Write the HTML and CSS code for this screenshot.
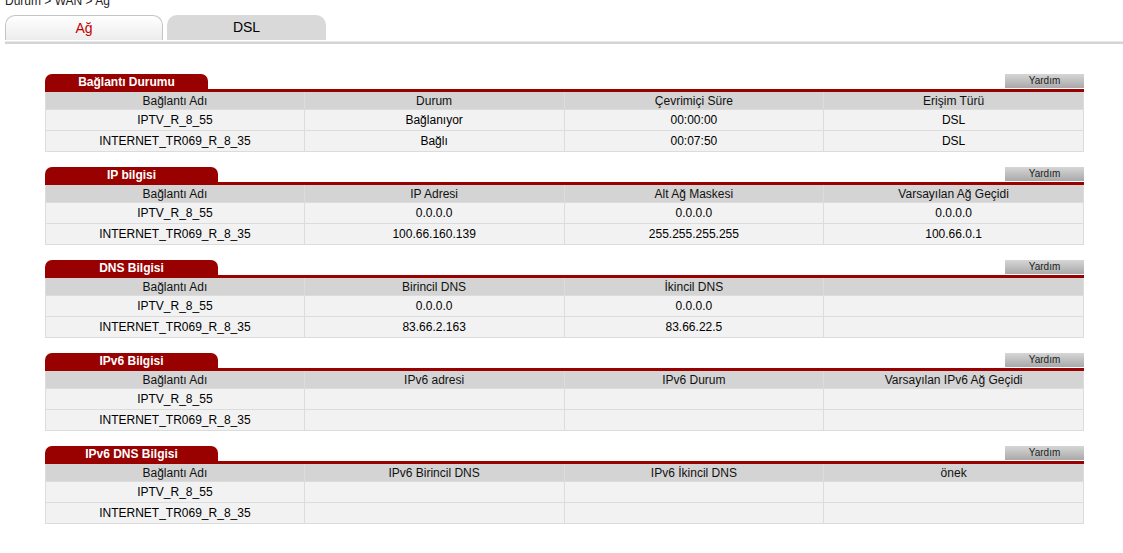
FILE: index.html
```html
<!DOCTYPE html>
<html lang="tr">
<head>
<meta charset="utf-8">
<title>WAN</title>
<link rel="stylesheet" href="styles.css">
</head>
<body>
<div class="crumb">Durum &gt; WAN &gt; Ağ</div>
<div class="tabs">
  <div class="tab active">Ağ</div>
  <div class="tab">DSL</div>
</div>
<div class="tabline"></div>

<div class="content">
  <section class="box">
    <div class="box-head">
      <div class="title w163">Bağlantı Durumu</div>
      <div class="help">Yardım</div>
    </div>
    <table>
      <tr><th>Bağlantı Adı</th><th>Durum</th><th>Çevrimiçi Süre</th><th>Erişim Türü</th></tr>
      <tr><td>IPTV_R_8_55</td><td>Bağlanıyor</td><td>00:00:00</td><td>DSL</td></tr>
      <tr><td>INTERNET_TR069_R_8_35</td><td>Bağlı</td><td>00:07:50</td><td>DSL</td></tr>
    </table>
  </section>

  <section class="box">
    <div class="box-head">
      <div class="title">IP bilgisi</div>
      <div class="help">Yardım</div>
    </div>
    <table>
      <tr><th>Bağlantı Adı</th><th>IP Adresi</th><th>Alt Ağ Maskesi</th><th>Varsayılan Ağ Geçidi</th></tr>
      <tr><td>IPTV_R_8_55</td><td>0.0.0.0</td><td>0.0.0.0</td><td>0.0.0.0</td></tr>
      <tr><td>INTERNET_TR069_R_8_35</td><td>100.66.160.139</td><td>255.255.255.255</td><td>100.66.0.1</td></tr>
    </table>
  </section>

  <section class="box">
    <div class="box-head">
      <div class="title">DNS Bilgisi</div>
      <div class="help">Yardım</div>
    </div>
    <table>
      <tr><th>Bağlantı Adı</th><th>Birincil DNS</th><th>İkincil DNS</th><th></th></tr>
      <tr><td>IPTV_R_8_55</td><td>0.0.0.0</td><td>0.0.0.0</td><td></td></tr>
      <tr><td>INTERNET_TR069_R_8_35</td><td>83.66.2.163</td><td>83.66.22.5</td><td></td></tr>
    </table>
  </section>

  <section class="box">
    <div class="box-head">
      <div class="title">IPv6 Bilgisi</div>
      <div class="help">Yardım</div>
    </div>
    <table>
      <tr><th>Bağlantı Adı</th><th>IPv6 adresi</th><th>IPv6 Durum</th><th>Varsayılan IPv6 Ağ Geçidi</th></tr>
      <tr><td>IPTV_R_8_55</td><td></td><td></td><td></td></tr>
      <tr><td>INTERNET_TR069_R_8_35</td><td></td><td></td><td></td></tr>
    </table>
  </section>

  <section class="box">
    <div class="box-head">
      <div class="title">IPv6 DNS Bilgisi</div>
      <div class="help">Yardım</div>
    </div>
    <table>
      <tr><th>Bağlantı Adı</th><th>IPv6 Birincil DNS</th><th>IPv6 İkincil DNS</th><th>önek</th></tr>
      <tr><td>IPTV_R_8_55</td><td></td><td></td><td></td></tr>
      <tr><td>INTERNET_TR069_R_8_35</td><td></td><td></td><td></td></tr>
    </table>
  </section>
</div>
</body>
</html>
```

FILE: styles.css
```css
html, body {
  margin: 0;
  padding: 0;
  background: #fff;
}
body {
  font-family: "Liberation Sans", Arial, sans-serif;
  font-size: 12px;
  color: #000;
}
.crumb {
  margin: -6px 0 0 5px;
  height: 14px;
  line-height: 14px;
  font-size: 12px;
  color: #222;
}
.tabs {
  display: flex;
  gap: 4px;
  margin: 7px 0 0 5px;
  height: 26px;
}
.tab {
  width: 159px;
  height: 25px;
  box-sizing: border-box;
  text-align: center;
  line-height: 25px;
  font-size: 14px;
  border-radius: 10px 10px 0 0;
  background: #d9d9d9;
  color: #000;
}
.tab.active {
  width: 158px;
  border: 1px solid #c4c4c4;
  border-bottom: none;
  background: linear-gradient(#ffffff, #ececec);
  color: #c00000;
  line-height: 24px;
}
.tabline {
  margin: 0 0 0 5px;
  border-top: 1px solid #e8e8e8;
  border-bottom: 2px solid #d4d4d4;
  height: 0;
}
.content {
  margin: 30px 0 0 45px;
  width: 1039px;
  display: flex;
  flex-direction: column;
  gap: 15px;
}
.box-head {
  display: flex;
  justify-content: space-between;
  align-items: flex-start;
  height: 15px;
  border-bottom: 3px solid #990000;
}
.title {
  width: 173px;
  height: 15px;
  line-height: 16px;
  background: #990000;
  color: #fff;
  font-weight: bold;
  font-size: 12px;
  text-align: center;
  border-radius: 7px 7px 0 0;
}
.title.w163 {
  width: 163px;
}
.help {
  width: 79px;
  height: 14px;
  line-height: 14px;
  font-size: 10px;
  text-align: center;
  color: #222;
  background: linear-gradient(#d6d6d6, #a9a9a9);
}
table {
  width: 100%;
  border-collapse: separate;
  border-spacing: 0;
  table-layout: fixed;
}
th, td {
  border-right: 1px solid #dcdcdc;
  border-bottom: 1px solid #dcdcdc;
  text-align: center;
  font-weight: normal;
  padding: 0;
  font-size: 12px;
}
th:first-child, td:first-child {
  border-left: 1px solid #dcdcdc;
}
th {
  background: #d4d4d4;
  height: 17px;
  color: #111;
}
td {
  background: #f2f2f2;
  height: 20px;
}
```
